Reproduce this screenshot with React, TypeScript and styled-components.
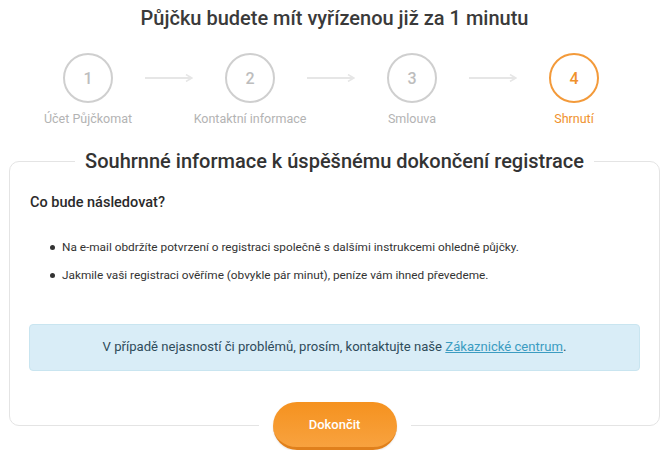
import * as React from 'react'
import styled, { createGlobalStyle } from 'styled-components'

const steps = ['Účet Půjčkomat', 'Kontaktní informace', 'Smlouva', 'Shrnutí']
const activeStep = 3

const App = () => {
  return (
    <>
      <GlobalStyle />
      <Page>
        <Title>Půjčku budete mít vyřízenou již za 1 minutu</Title>
        <Steps>
          {steps.map((label, i) => (
            <React.Fragment key={label}>
              {i > 0 && (
                <Arrow>
                  <svg width="48" height="8" viewBox="0 0 48 8">
                    <path d="M0 4 H46" stroke="#e6e6e6" strokeWidth="2" />
                    <path d="M41 0.5 L47 4 L41 7.5" fill="none" stroke="#e6e6e6" strokeWidth="1.5" />
                  </svg>
                </Arrow>
              )}
              <Step>
                <Circle $active={i === activeStep}>{i + 1}</Circle>
                <StepLabel $active={i === activeStep}>{label}</StepLabel>
              </Step>
            </React.Fragment>
          ))}
        </Steps>
        <Card>
          <HeadingRow>
            <CardHeading>Souhrnné informace k úspěšnému dokončení registrace</CardHeading>
          </HeadingRow>
          <SubHeading>Co bude následovat?</SubHeading>
          <List>
            <Item>Na e-mail obdržíte potvrzení o registraci společně s dalšími instrukcemi ohledně půjčky.</Item>
            <Item>Jakmile vaši registraci ověříme (obvykle pár minut), peníze vám ihned převedeme.</Item>
          </List>
          <InfoBox>
            V případě nejasností či problémů, prosím, kontaktujte naše <Link href="#">Zákaznické centrum</Link>.
          </InfoBox>
        </Card>
        <Footer>
          <ButtonHalo>
            <Button>Dokončit</Button>
          </ButtonHalo>
        </Footer>
      </Page>
    </>
  )
}

export default App

// Styles
const GlobalStyle = createGlobalStyle`
  html, body {
    margin: 0;
    padding: 0;
    background: #fff;
  }
  body {
    font-family: Roboto, "Open Sans", sans-serif;
    color: #333;
  }
`

const Page = styled.div`
  width: 669px;
  padding-top: 6px;
`

const Title = styled.h1`
  margin: 0;
  text-align: center;
  font-size: 20px;
  line-height: 24px;
  font-weight: 500;
  color: #3a3a3a;
`

const Steps = styled.div`
  display: flex;
  align-items: flex-start;
  padding-left: 31px;
  margin-top: 23px;
`

const Step = styled.div`
  width: 114px;
  display: flex;
  flex-direction: column;
  align-items: center;
`

const Circle = styled.div<{ $active?: boolean }>`
  width: 46px;
  height: 46px;
  border-radius: 50%;
  border: 2px solid ${(p) => (p.$active ? '#f39a3a' : '#cfcfcf')};
  color: ${(p) => (p.$active ? '#f0912c' : '#bdbdbd')};
  display: flex;
  align-items: center;
  justify-content: center;
  font-size: 16px;
  font-weight: 500;
`

const StepLabel = styled.div<{ $active?: boolean }>`
  margin-top: 8px;
  white-space: nowrap;
  font-size: 12.5px;
  line-height: 16px;
  color: ${(p) => (p.$active ? '#f0912c' : '#b3b3b3')};
`

const Arrow = styled.div`
  width: 48px;
  height: 50px;
  display: flex;
  align-items: center;
`

const Card = styled.div`
  margin: 34px 9px 0 9px;
  border: 1px solid #e4e4e4;
  border-radius: 10px;
  padding: 0 20px 54px 20px;
`

const HeadingRow = styled.div`
  display: flex;
  justify-content: center;
  margin-top: -14px;
`

const CardHeading = styled.h2`
  margin: 0;
  padding: 0 10px;
  background: #fff;
  font-size: 20px;
  line-height: 26px;
  font-weight: 500;
  color: #333;
`

const SubHeading = styled.h3`
  margin: 19px 0 0 0;
  font-size: 14.5px;
  line-height: 20px;
  font-weight: 500;
  color: #2a2a2a;
`

const List = styled.ul`
  list-style: none;
  margin: 26px 0 0 0;
  padding: 0 0 0 20px;
`

const Item = styled.li`
  position: relative;
  padding-left: 12px;
  font-size: 11.8px;
  line-height: 16px;
  margin-bottom: 12px;
  color: #333;

  &::before {
    content: '';
    position: absolute;
    left: 0;
    top: 6px;
    width: 5px;
    height: 5px;
    border-radius: 50%;
    background: #333;
  }
`

const InfoBox = styled.div`
  margin: 41px -1px 0 -1px;
  padding: 14px 10px 15px 10px;
  background: #d9edf7;
  border: 1px solid #c9e5f0;
  border-radius: 4px;
  text-align: center;
  font-size: 13.1px;
  line-height: 16px;
  color: #2e4b5a;
`

const Link = styled.a`
  color: #3b9cc1;
  text-decoration: underline;
`

const Footer = styled.div`
  display: flex;
  justify-content: center;
  margin-top: -24px;
`

const ButtonHalo = styled.div`
  background: #fff;
  padding: 0 14px;
`

const Button = styled.button`
  width: 124px;
  height: 48px;
  border: none;
  border-bottom: 3px solid #e0801c;
  border-radius: 24px;
  background: linear-gradient(to bottom, #f5921f, #f8a23f);
  color: #fff;
  font-family: inherit;
  font-size: 13px;
  font-weight: 500;
  cursor: pointer;
  box-shadow: 0 1px 2px rgba(0, 0, 0, 0.1);
`
